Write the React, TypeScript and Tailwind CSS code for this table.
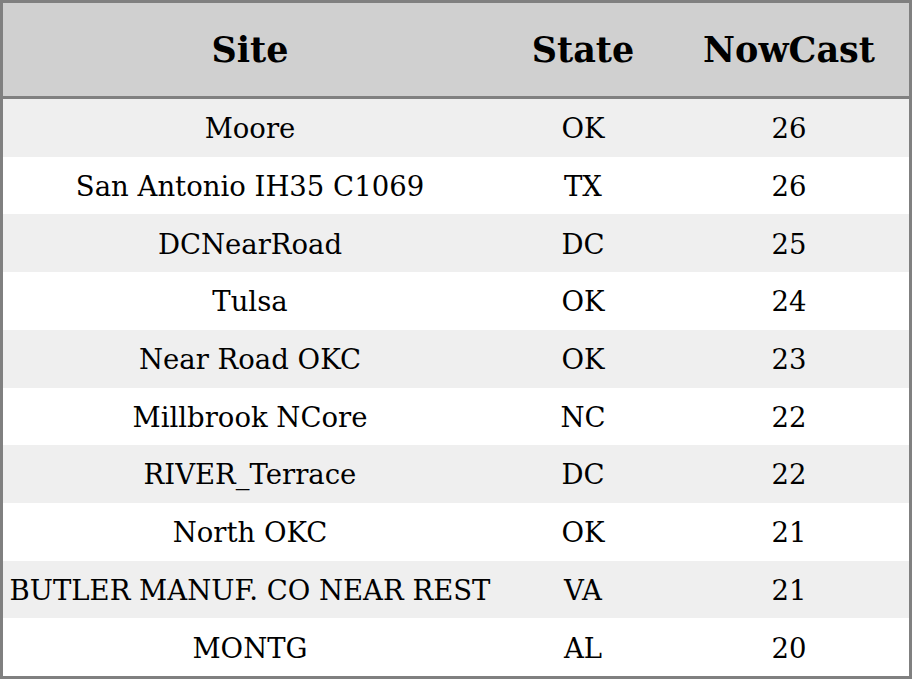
import React from 'react';

const rows: [string, string, string][] = [
  ['Moore', 'OK', '26'],
  ['San Antonio IH35 C1069', 'TX', '26'],
  ['DCNearRoad', 'DC', '25'],
  ['Tulsa', 'OK', '24'],
  ['Near Road OKC', 'OK', '23'],
  ['Millbrook NCore', 'NC', '22'],
  ['RIVER_Terrace', 'DC', '22'],
  ['North OKC', 'OK', '21'],
  ['BUTLER MANUF. CO NEAR REST', 'VA', '21'],
  ['MONTG', 'AL', '20'],
];

const App: React.FC = () => {
  return (
    <div
      className="w-[912px] h-[679px] border-[3px] border-[#808080] bg-white text-black flex flex-col"
      style={{ fontFamily: '"DejaVu Serif", "Liberation Serif", serif' }}
    >
      <div className="h-[91px] shrink-0 grid grid-cols-[494px_172px_1fr] items-center pt-[2px] bg-[#d0d0d0] border-b-[3px] border-[#808080] box-content text-[35px] font-bold">
        <div className="text-center">Site</div>
        <div className="text-center">State</div>
        <div className="text-center">NowCast</div>
      </div>
      <div className="flex-1 flex flex-col">
        {rows.map(([site, state, value], i) => (
          <div
            key={site}
            className={`flex-1 grid grid-cols-[494px_172px_1fr] items-center pt-[2px] text-[27.5px] ${
              i % 2 === 0 ? 'bg-[#efefef]' : 'bg-white'
            }`}
          >
            <div className="text-center whitespace-nowrap">{site}</div>
            <div className="text-center">{state}</div>
            <div className="text-center">{value}</div>
          </div>
        ))}
      </div>
    </div>
  );
};

export default App;
